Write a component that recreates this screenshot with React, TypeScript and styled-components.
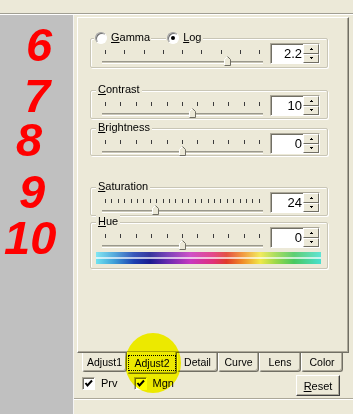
import React from "react";
import styled, { createGlobalStyle } from "styled-components";

const GlobalStyle = createGlobalStyle`
  html, body {
    margin: 0;
    padding: 0;
    background: #ece9d8;
  }
  body {
    font-family: "Liberation Sans", Arial, sans-serif;
    font-size: 11px;
    color: #000;
  }
`;

const Screen = styled.div`
  position: relative;
  width: 353px;
  height: 414px;
  display: flex;
  flex-direction: column;
  background: #ece9d8;
  overflow: hidden;
`;

const TopStrip = styled.div`
  flex: none;
  height: 13px;
  border-bottom: 1px solid #a19f93;
`;

const Body = styled.div`
  flex: 1;
  display: flex;
  border-top: 1px solid #fff;
`;

const Gutter = styled.div`
  flex: none;
  width: 73px;
  background: #c0c0c0;
  border-right: 1px solid #f4f4f4;
  display: flex;
  flex-direction: column;
`;

const Mark = styled.div<{ $x: number; $top: number }>`
  margin: ${(p) => p.$top}px 0 0 ${(p) => p.$x}px;
  font: italic bold 47px/36px "Liberation Sans", Arial, sans-serif;
  color: #ff0000;
`;

const Main = styled.div`
  flex: 1;
  display: flex;
  flex-direction: column;
`;

const Panel = styled.div`
  flex: none;
  height: 336px;
  margin: 2px 4px 0 3px;
  box-sizing: border-box;
  border: 1px solid;
  border-color: #fff #716f64 #716f64 #fff;
  box-shadow: inset -1px -1px 0 #aca899;
  padding-left: 12px;
  display: flex;
  flex-direction: column;
`;

const Group = styled.div<{ $top: number; $h: number }>`
  position: relative;
  flex: none;
  width: 238px;
  height: ${(p) => p.$h}px;
  margin-top: ${(p) => p.$top}px;
  box-sizing: border-box;
  border: 1px solid #c9c6b6;
  border-radius: 2px;
  box-shadow: inset 1px 1px 0 #fff, 1px 1px 0 #fff;
  padding: 4px 0 0 5px;
`;

const Legend = styled.div`
  position: absolute;
  top: -8px;
  left: 5px;
  padding: 0 2px;
  background: #ece9d8;
  line-height: 13px;
`;

const LegendRow = styled.div`
  position: absolute;
  top: -8px;
  left: 3px;
  display: flex;
  gap: 15px;
`;

const RadioItem = styled.label`
  display: flex;
  align-items: center;
  gap: 4px;
  padding: 0 1px;
  background: #ece9d8;
  line-height: 13px;
`;

const Radio = styled.span<{ $on?: boolean }>`
  position: relative;
  width: 12px;
  height: 12px;
  box-sizing: border-box;
  border-radius: 50%;
  background: #fff;
  border: 1px solid;
  border-color: #a0a0a0 #fff #fff #a0a0a0;
  box-shadow: inset 1px 1px 0 #6f6f6f;

  &::after {
    content: "";
    display: ${(p) => (p.$on ? "block" : "none")};
    position: absolute;
    left: 3px;
    top: 3px;
    width: 4px;
    height: 4px;
    border-radius: 50%;
    background: #000;
  }
`;

const Acc = styled.span`
  text-decoration: underline;
`;

const Row = styled.div`
  display: flex;
  align-items: flex-start;
  gap: 7px;
  padding-left: 6px;
`;

const Slider = styled.div`
  position: relative;
  flex: none;
  width: 161px;
  height: 21px;
  padding-top: 7px;
  box-sizing: border-box;
`;

const Ticks = styled.div`
  display: flex;
  justify-content: space-between;
  height: 4px;
  margin: 0 3px;
`;

const Tick = styled.span`
  width: 1px;
  height: 4px;
  background: #3c3c3c;
`;

const Track = styled.div`
  margin-top: 7px;
  height: 1px;
  border-top: 1px solid #9a988c;
  border-bottom: 1px solid #fff;
  background: #c9c6b6;
`;

const Thumb = styled.svg`
  position: absolute;
  top: 13px;
`;

const Edit = styled.div`
  flex: none;
  width: 50px;
  height: 21px;
  box-sizing: border-box;
  display: flex;
  background: #fff;
  border: 1px solid;
  border-color: #aca899 #fff #fff #aca899;
  box-shadow: inset 1px 1px 0 #716f64;
`;

const Value = styled.span`
  flex: 1;
  text-align: right;
  padding-right: 1px;
  font-size: 13px;
  line-height: 19px;
`;

const Spinner = styled.div`
  flex: none;
  width: 16px;
  display: flex;
  flex-direction: column;
`;

const SpinBtn = styled.div`
  flex: 1;
  display: flex;
  align-items: center;
  justify-content: center;
  box-sizing: border-box;
  background: #ece9d8;
  border: 1px solid;
  border-color: #fff #716f64 #716f64 #fff;
`;

const spectrum =
  "linear-gradient(to right, #6fe3f0 0%, #3fa0d8 8%, #1c3fb0 17%, #1a1a90 24%, #6a2ab0 32%, #c838c0 42%, #e0307a 52%, #e03a2a 58%, #f08a28 65%, #f0e848 73%, #9ad84a 80%, #48c860 88%, #48e0d0 100%)";

const HueBar = styled.div`
  width: 225px;
  height: 12px;
  margin-top: 4px;
  display: flex;
  flex-direction: column;
`;

const HueBand = styled.div<{ $h: number; $fade: number }>`
  height: ${(p) => p.$h}px;
  background: linear-gradient(
      rgba(255, 255, 255, ${(p) => p.$fade}),
      rgba(255, 255, 255, ${(p) => p.$fade})
    ),
    ${spectrum};
`;

const TabRow = styled.div`
  flex: none;
  height: 20px;
  display: flex;
  align-items: flex-start;
  padding-left: 8px;
`;

const Tab = styled.div<{ $w: number; $active?: boolean }>`
  flex: none;
  width: ${(p) => p.$w}px;
  height: ${(p) => (p.$active ? 22 : 19)}px;
  margin-top: ${(p) => (p.$active ? -1 : 0)}px;
  box-sizing: border-box;
  display: flex;
  justify-content: center;
  align-items: flex-start;
  padding-top: ${(p) => (p.$active ? 3 : 2)}px;
  background: #ece9d8;
  border: 1px solid;
  border-top: none;
  border-color: #fff #716f64 #716f64 #fff;
  box-shadow: inset -1px -1px 0 #aca899;
  border-radius: 0 0 3px 3px;
  font-size: 10.5px;
  line-height: 15px;
`;

const FocusLabel = styled.span`
  padding: 0 5px;
  line-height: 14px;
  border: 1px dotted #000;
`;

const BottomBar = styled.div`
  flex: none;
  height: 25px;
  box-sizing: border-box;
  display: flex;
  align-items: flex-start;
  padding: 2px 13px 0 8px;
`;

const CheckItem = styled.label`
  display: flex;
  align-items: center;
  gap: 6px;
  margin: 2px 16px 0 0;
  line-height: 13px;
`;

const CheckBox = styled.span`
  width: 13px;
  height: 13px;
  box-sizing: border-box;
  display: flex;
  align-items: center;
  justify-content: center;
  background: #fff;
  border: 1px solid;
  border-color: #aca899 #fff #fff #aca899;
  box-shadow: inset 1px 1px 0 #716f64;
`;

const ResetButton = styled.div`
  margin-left: auto;
  width: 44px;
  height: 21px;
  box-sizing: border-box;
  display: flex;
  align-items: center;
  justify-content: center;
  background: #ece9d8;
  border: 1px solid;
  border-color: #fff #404040 #404040 #fff;
  box-shadow: inset -1px -1px 0 #aca899;
  font-size: 11px;
`;

const Separator = styled.div`
  flex: none;
  border-top: 1px solid #aca899;
  border-bottom: 1px solid #fff;
`;

const Highlight = styled.div`
  position: absolute;
  left: 125px;
  top: 333px;
  width: 56px;
  height: 60px;
  border-radius: 50%;
  background: #ffff00;
  mix-blend-mode: multiply;
  pointer-events: none;
`;

const ThumbIcon = ({ pos }: { pos: number }) => (
  <Thumb width="7" height="10" viewBox="0 0 7 10" style={{ left: pos * 154 }}>
    <path d="M0.5 9.5V3.5L3.5 0.5L6.5 3.5V9.5Z" fill="#ece9d8" />
    <path d="M0.5 9.5V3.5L3.5 0.5" stroke="#fff" fill="none" />
    <path d="M3.5 0.5L6.5 3.5V9.5H0.5" stroke="#716f64" fill="none" />
  </Thumb>
);

const Arrow = ({ down }: { down?: boolean }) => (
  <svg width="5" height="3" viewBox="0 0 5 3" shapeRendering="crispEdges">
    {down ? (
      <>
        <rect x="1" y="0" width="3" height="1" fill="#000" />
        <rect x="2" y="1" width="1" height="1" fill="#000" />
      </>
    ) : (
      <>
        <rect x="2" y="1" width="1" height="1" fill="#000" />
        <rect x="1" y="2" width="3" height="1" fill="#000" />
      </>
    )}
  </svg>
);

const SliderRow = ({ ticks, pos, value }: { ticks: number; pos: number; value: string }) => (
  <Row>
    <Slider>
      <Ticks>
        {Array.from({ length: ticks }, (_, i) => (
          <Tick key={i} />
        ))}
      </Ticks>
      <Track />
      <ThumbIcon pos={pos} />
    </Slider>
    <Edit>
      <Value>{value}</Value>
      <Spinner>
        <SpinBtn>
          <Arrow />
        </SpinBtn>
        <SpinBtn>
          <Arrow down />
        </SpinBtn>
      </Spinner>
    </Edit>
  </Row>
);

const Check = () => (
  <svg width="9" height="9" viewBox="0 0 9 9">
    <path d="M1.5 4L3.5 6.5L8 1.5" stroke="#000" strokeWidth="2" fill="none" />
  </svg>
);

const marks = [
  { n: "6", x: 26, top: 12 },
  { n: "7", x: 24, top: 15 },
  { n: "8", x: 16, top: 8 },
  { n: "9", x: 19, top: 16 },
  { n: "10", x: 4, top: 10 },
];

const tabs = [
  { label: "Adjust1", w: 45 },
  { label: "Adjust2", w: 50, active: true },
  { label: "Detail", w: 41 },
  { label: "Curve", w: 41 },
  { label: "Lens", w: 42 },
  { label: "Color", w: 42 },
];

export default function App() {
  return (
    <>
      <GlobalStyle />
      <Screen>
        <TopStrip />
        <Body>
          <Gutter>
            {marks.map((m) => (
              <Mark key={m.n} $x={m.x} $top={m.top}>
                {m.n}
              </Mark>
            ))}
          </Gutter>
          <Main>
            <Panel>
              <Group $top={20} $h={30}>
                <LegendRow>
                  <RadioItem>
                    <Radio />
                    <span>
                      <Acc>G</Acc>amma
                    </span>
                  </RadioItem>
                  <RadioItem>
                    <Radio $on />
                    <span>
                      <Acc>L</Acc>og
                    </span>
                  </RadioItem>
                </LegendRow>
                <SliderRow ticks={9} pos={0.79} value="2.2" />
              </Group>

              <Group $top={22} $h={29}>
                <Legend>
                  <Acc>C</Acc>ontrast
                </Legend>
                <SliderRow ticks={11} pos={0.565} value="10" />
              </Group>

              <Group $top={9} $h={28}>
                <Legend>
                  <Acc>B</Acc>rightness
                </Legend>
                <SliderRow ticks={11} pos={0.5} value="0" />
              </Group>

              <Group $top={31} $h={29}>
                <Legend>
                  <Acc>S</Acc>aturation
                </Legend>
                <SliderRow ticks={25} pos={0.325} value="24" />
              </Group>

              <Group $top={6} $h={47}>
                <Legend>
                  <Acc>H</Acc>ue
                </Legend>
                <SliderRow ticks={11} pos={0.5} value="0" />
                <HueBar>
                  <HueBand $h={5} $fade={0.12} />
                  <HueBand $h={2} $fade={0.7} />
                  <HueBand $h={5} $fade={0} />
                </HueBar>
              </Group>
            </Panel>

            <TabRow>
              {tabs.map((t) => (
                <Tab key={t.label} $w={t.w} $active={t.active}>
                  {t.active ? <FocusLabel>{t.label}</FocusLabel> : t.label}
                </Tab>
              ))}
            </TabRow>

            <BottomBar>
              <CheckItem>
                <CheckBox>
                  <Check />
                </CheckBox>
                Prv
              </CheckItem>
              <CheckItem>
                <CheckBox>
                  <Check />
                </CheckBox>
                Mgn
              </CheckItem>
              <ResetButton>
                <span>
                  <Acc>R</Acc>eset
                </span>
              </ResetButton>
            </BottomBar>
            <Separator />
          </Main>
        </Body>
        <Highlight />
      </Screen>
    </>
  );
}
